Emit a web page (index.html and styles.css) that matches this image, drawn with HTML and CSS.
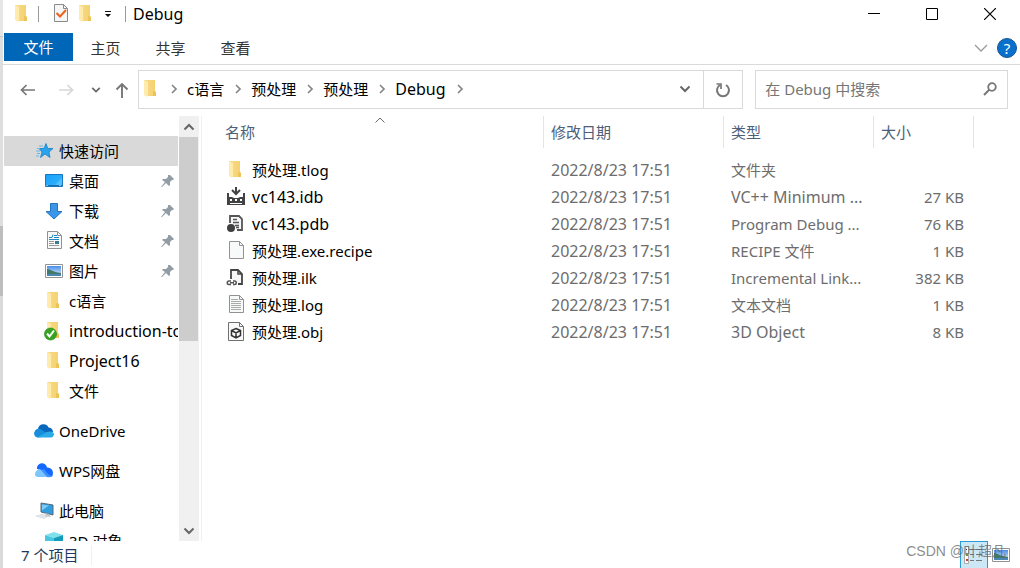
FILE: index.html
```html
<!DOCTYPE html>
<html lang="zh-CN">
<head>
<meta charset="utf-8">
<title>Debug</title>
<link rel="stylesheet" href="styles.css">
</head>
<body>
<svg class="defs" aria-hidden="true">
  <defs>
    <linearGradient id="gf" x1="0" x2="1"><stop offset="0" stop-color="#f8dc8c"/><stop offset="1" stop-color="#f5d06c"/></linearGradient>
    <linearGradient id="gb" x1="0" x2="1" y2="1"><stop offset="0" stop-color="#16a0f8"/><stop offset="1" stop-color="#36b6ff"/></linearGradient>
    <linearGradient id="gs" y2="1" x2="0"><stop offset="0" stop-color="#4b8de8"/><stop offset="1" stop-color="#e2f1fb"/></linearGradient>
  </defs>
  <symbol id="folder" viewBox="0 0 20 20"><path d="M3 1h11v11l1 1v4H5L3 15z" fill="url(#gf)"/><path d="M3 1l4 2v13l-1 2-3-2z" fill="#ffebad"/><path d="M12 12l3 1v4h-3z" fill="#edc256"/></symbol>
  <symbol id="page" viewBox="0 0 20 20"><path d="M3.500 .5h10l4 4v13h-14z" fill="#f8f9f9" stroke="#929292"/><path d="M13.500 .5v4h4" fill="none" stroke="#929292"/></symbol>
  <symbol id="pin" viewBox="0 0 14 14"><path d="M9 1l4 4-1 1-1 0-2 2 0 3-1 1-3-3-4 4-1 0 4-5-3-2 1-1 3 0 2-2 0-2z" fill="#929ca5"/></symbol>
  <symbol id="picture" viewBox="0 0 20 20"><path d="M1.500 3.500h17v13h-17z" fill="#fff" stroke="#929292"/><path d="M3 5h14v10H3z" fill="url(#gs)"/><path d="M3 8c4 0 5 3 14 4v1H3z" fill="#42796b"/><path d="M3 13h14v2H3z" fill="#4c87b4"/></symbol>
  <symbol id="right" viewBox="0 0 10 10"><path d="M3 1l4 4-4 4" fill="none" stroke="#858585" stroke-width="1.700"/></symbol>
  <symbol id="down" viewBox="0 0 12 12"><path d="M1.500 3.500L6 8l4.500-4.500" fill="none" stroke="currentColor" stroke-width="2"/></symbol>
</svg>

<div class="window">
  <header class="titlebar">
    <svg class="icon"><use href="#folder"/></svg>
    <span class="rule"></span>
    <button class="quick" aria-label="属性"><svg class="icon" viewBox="0 0 20 20"><path d="M3.500 .5h9l4 4v13h-13z" fill="#f5f6f8" stroke="#8a8a8a"/><path d="M12.500 .5v4h4" fill="none" stroke="#8a8a8a"/><path d="M5.500 9l3.500 3.500L15 6" fill="none" stroke="#ee621c" stroke-width="2"/></svg></button>
    <button class="quick second" aria-label="新建文件夹"><svg class="icon"><use href="#folder"/></svg></button>
    <button class="quick more" aria-label="自定义快速访问工具栏"><svg viewBox="0 0 8 8"><path d="M1 1h6v1H1zM1 4h6L4 7z" fill="#111"/></svg></button>
    <span class="rule"></span>
    <h1 class="title">Debug</h1>
    <div class="controls">
      <button aria-label="最小化"><svg viewBox="0 0 12 12"><path d="M0 5.500h12" stroke="#000"/></svg></button>
      <button aria-label="最大化"><svg viewBox="0 0 12 12"><path d="M.5.500h11v11H.5z" fill="none" stroke="#000"/></svg></button>
      <button aria-label="关闭"><svg viewBox="0 0 12 12"><path d="M0 0l12 12M12 0L0 12" stroke="#000" stroke-width="1.200"/></svg></button>
    </div>
  </header>

  <nav class="ribbon">
    <button class="tab file">文件</button>
    <button class="tab">主页</button>
    <button class="tab">共享</button>
    <button class="tab">查看</button>
    <button class="expand" aria-label="展开功能区"><svg viewBox="0 0 14 14"><path d="M1 4l6 6 6-6" fill="none" stroke="#9a9a9a" stroke-width="1.300"/></svg></button>
    <button class="help" aria-label="帮助">?</button>
  </nav>

  <div class="address">
    <div class="moves">
      <button aria-label="后退"><svg viewBox="0 0 16 16"><path d="M15 8H1.500M6.500 3l-5 5 5 5" fill="none" stroke="#777" stroke-width="1.700"/></svg></button>
      <button class="forward" aria-label="前进"><svg viewBox="0 0 16 16"><path d="M1 8h13.500M9.500 3l5 5-5 5" fill="none" stroke="#d7d7d7" stroke-width="1.700"/></svg></button>
      <button class="recent" aria-label="最近位置"><svg><use href="#down"/></svg></button>
      <button class="up" aria-label="上移"><svg viewBox="0 0 16 16"><path d="M8 16V2M2.500 7.500L8 2l5.500 5.500" fill="none" stroke="#777" stroke-width="1.900"/></svg></button>
    </div>
    <div class="path">
      <svg class="icon"><use href="#folder"/></svg>
      <svg class="sep"><use href="#right"/></svg><a href="#c">c语言</a>
      <svg class="sep"><use href="#right"/></svg><a href="#p1">预处理</a>
      <svg class="sep"><use href="#right"/></svg><a href="#p2">预处理</a>
      <svg class="sep"><use href="#right"/></svg><a class="latin" href="#debug">Debug</a>
      <svg class="sep"><use href="#right"/></svg>
      <button class="history" aria-label="以前的位置"><svg><use href="#down"/></svg></button>
      <button class="refresh" aria-label="刷新"><svg viewBox="0 0 16 16"><path d="M11 3a6 6 0 1 1-6 0" fill="none" stroke="#777" stroke-width="2"/><path d="M1.500 2H6v5" fill="none" stroke="#777" stroke-width="1.700"/></svg></button>
    </div>
    <div class="search">
      <input type="text" placeholder="在 Debug 中搜索" aria-label="在 Debug 中搜索">
      <svg viewBox="0 0 14 14"><circle cx="9" cy="5" r="3.800" fill="none" stroke="#777" stroke-width="1.800"/><path d="M6.500 7.500L1 13" stroke="#777" stroke-width="2"/></svg>
    </div>
  </div>

  <main class="content">
    <div class="side">
      <nav class="tree">
        <a class="root selected" href="#quick"><svg class="icon" viewBox="0 0 20 20"><path d="M12 2.500l1.800 5h5.200l-4 3.500 1 5.500-5-3.500-4.500 3.500 1.500-5.500-3-3.500h5z" fill="#2aa3ed" stroke="#1780c8" stroke-width=".8"/><path d="M5 5h4M3 7.500h3M2 10h4M3 12.500h3M2 15h3" stroke="#67b6e8"/></svg><span>快速访问</span></a>
        <a href="#desktop"><svg class="icon" viewBox="0 0 20 20"><path d="M1.500 3.500h17v12h-17z" fill="url(#gb)" stroke="#1479bf"/><path d="M10 15l8-8v8z" fill="#55c1ff"/><path d="M2 14.500h16" stroke="#166fa8"/><path d="M2.500 14.500h2m11 0h2" stroke="#fff" stroke-dasharray="1 1"/></svg><span>桌面</span><svg class="pin"><use href="#pin"/></svg></a>
        <a href="#downloads"><svg class="icon" viewBox="0 0 20 20"><path d="M6.500 2.500h7v8h4.500l-8 7.500-8-7.500h4.500z" fill="#3b96e8" stroke="#2575bf"/></svg><span>下载</span><svg class="pin"><use href="#pin"/></svg></a>
        <a href="#documents"><svg class="icon" viewBox="0 0 20 20"><use href="#page"/><path d="M5 6.500h3l1-3M10 4.500h3m-3 2h5M5 8.500h10" stroke="#2387c4" fill="none"/><path d="M5 10.500h5m-5 2h5m-5 2h10" stroke="#999"/><path d="M11 10h4v3h-4z" fill="#397a99"/></svg><span>文档</span><svg class="pin"><use href="#pin"/></svg></a>
        <a href="#pictures"><svg class="icon"><use href="#picture"/></svg><span>图片</span><svg class="pin"><use href="#pin"/></svg></a>
        <a href="#clang"><svg class="icon"><use href="#folder"/></svg><span>c语言</span></a>
        <a href="#intro"><svg class="icon" viewBox="0 0 20 20"><use href="#folder"/><circle cx="6.500" cy="13" r="6" fill="#35a521" stroke="#23851a" stroke-width=".7"/><path d="M3 12.500l2.500 3L10 9.500" fill="none" stroke="#fff" stroke-width="2"/></svg><span class="latin">introduction-to</span></a>
        <a href="#project"><svg class="icon"><use href="#folder"/></svg><span class="latin">Project16</span></a>
        <a href="#files"><svg class="icon"><use href="#folder"/></svg><span>文件</span></a>
        <a class="root group" href="#onedrive"><svg class="icon" viewBox="0 0 20 20"><path d="M4 8a5.500 5.500 0 0 1 10.500-1.500A4.500 4.500 0 0 1 19 11l-8 1-10 1A4 4 0 0 1 4 8z" fill="#0868bd"/><path d="M4 16.500a4 4 0 0 1-3-6.500c2-3 5-2.500 7-1l9 6z" fill="#188ddb"/><path d="M3 16.500L13 11c4-1.500 7 0 7 2.500a3.500 3.500 0 0 1-3 3z" fill="#2aabe8"/></svg><span>OneDrive</span></a>
        <a class="root group" href="#wps"><svg class="icon" viewBox="0 0 20 20"><path d="M3 8a5 5 0 0 1 10-1.500c5 0 7 4 5.500 8-1 2-4 2-6 0L7 9z" fill="#1468ff"/><path d="M1 14C1 10 4 7.500 7 9l6.500 7H5c-2 0-3.500-.5-4-2z" fill="#7cc5ff"/><path d="M7 9l6 7c3 .5 5 0 6-2-2 1-4 0-5-1L10 8z" fill="#3b8fff"/></svg><span>WPS网盘</span></a>
        <a class="root group" href="#pc"><svg class="icon" viewBox="0 0 20 20"><path d="M7 2l12 2v10L7 11z" fill="#2f9dde" stroke="#596977"/><path d="M8 3.500l7 1-7 5z" fill="#7ccbf5"/><path d="M11 12l4 1 2 3-5-1z" fill="#b6c1c8"/><path d="M1 15l7-2 7 2-5 3z" fill="#d0d5da"/><path d="M4 15h7m-4 2h5" stroke="#f5f5f5"/></svg><span>此电脑</span></a>
        <a href="#objects"><svg class="icon" viewBox="0 0 20 20"><path d="M1 4l9-3 9 3-9 3z" fill="#80e0ed"/><path d="M1 4l9 3v12l-9-4z" fill="#48c7df"/><path d="M10 7l9-3v11l-9 4z" fill="#149dbb"/></svg><span>3D 对象</span></a>
      </nav>
      <div class="scroll">
        <button aria-label="向上滚动"><svg class="flip"><use href="#down"/></svg></button>
        <span class="thumb"></span>
        <button aria-label="向下滚动"><svg><use href="#down"/></svg></button>
      </div>
    </div>

    <div class="files">
      <table>
        <colgroup><col class="c-name"><col class="c-date"><col class="c-type"><col class="c-size"></colgroup>
        <thead><tr>
          <th><div>名称<svg class="sort" viewBox="0 0 10 6"><path d="M.5 5.500L5 1l4.500 4.500" fill="none" stroke="#666"/></svg></div></th>
          <th><div>修改日期</div></th><th><div>类型</div></th><th><div>大小</div></th>
        </tr></thead>
        <tbody>
          <tr><td><div class="name"><svg class="icon"><use href="#folder"/></svg>预处理.tlog</div></td><td class="latin">2022/8/23 17:51</td><td>文件夹</td><td></td></tr>
          <tr><td><div class="name latin"><svg class="icon" viewBox="0 0 20 20"><path d="M10 0v7M6 3l4 4 4-4" fill="none" stroke="#424242" stroke-width="2"/><path d="M1 6h2v4h3l2 1h4l2-1h3V6h2v12H1z" fill="#424242"/><path d="M4 12h2v2H4zm5 0h2v2H9zm5 0h2v2h-2zM4 16h12v1H4z" fill="#fff"/></svg>vc143.idb</div></td><td class="latin">2022/8/23 17:51</td><td class="latin">VC++ Minimum ...</td><td>27 KB</td></tr>
          <tr><td><div class="name latin"><svg class="icon" viewBox="0 0 20 20"><path d="M4 9V2h9l3 3v11h-5" fill="#f6f6f6" stroke="#555" stroke-width="1.800"/><path d="M7 5.500h4M7 8.500h6m-4 3h4m-3 2h3" stroke="#555" stroke-width="1.500"/><circle cx="5" cy="14" r="4" fill="#404040"/></svg>vc143.pdb</div></td><td class="latin">2022/8/23 17:51</td><td>Program Debug ...</td><td>76 KB</td></tr>
          <tr><td><div class="name"><svg class="icon"><use href="#page"/></svg>预处理.exe.recipe</div></td><td class="latin">2022/8/23 17:51</td><td>RECIPE 文件</td><td>1 KB</td></tr>
          <tr><td><div class="name"><svg class="icon" viewBox="0 0 20 20"><path d="M5 11V2h7l4 4v10h-4" fill="#f6f6f6" stroke="#444" stroke-width="1.800"/><path d="M12 2v4h4" fill="none" stroke="#444" stroke-width="1.500"/><path d="M5 13H3a1.500 1.500 0 0 0 0 3.500h2M7 13h1.500a1.500 1.500 0 0 1 0 3.500H7M4 14.700h4" fill="none" stroke="#555" stroke-width="1.500"/></svg>预处理.ilk</div></td><td class="latin">2022/8/23 17:51</td><td>Incremental Link...</td><td>382 KB</td></tr>
          <tr><td><div class="name"><svg class="icon" viewBox="0 0 20 20"><use href="#page"/><path d="M5 4.500h7m-7 2h10m-10 2h10m-10 2h10m-10 2h10m-10 2h10" stroke="#aaa"/></svg>预处理.log</div></td><td class="latin">2022/8/23 17:51</td><td>文本文档</td><td>1 KB</td></tr>
          <tr><td><div class="name"><svg class="icon" viewBox="0 0 20 20"><path d="M2.500.5h11l4 4v14h-15z" fill="#f9f9f9" stroke="#707070"/><path d="M13.500.5v4h4" fill="none" stroke="#707070"/><path d="M10 6.500l4.500 2v5L10 16l-4.500-2.500v-5zM5.500 8.500L10 11l4.500-2.500M10 11v5" fill="none" stroke="#333" stroke-width="1.500"/></svg>预处理.obj</div></td><td class="latin">2022/8/23 17:51</td><td class="latin">3D Object</td><td>8 KB</td></tr>
        </tbody>
      </table>
    </div>
  </main>

  <footer class="status">
    <span class="count">7 个项目</span>
    <div class="views">
      <button class="view active" aria-label="详细信息"><svg viewBox="0 0 20 20"><path d="M.5 1.500h4v17h-4z" fill="#fff" stroke="#aaa"/><path d="M2 4h1v1H2z" fill="#333"/><path d="M2 9h2v2H2z" fill="#7b8d42"/><path d="M2 14h2v2H2z" fill="#c34322"/><path d="M6 4.500h4m2 0h6M6 9.500h4m2 0h6M6 15.500h4m2 0h6" stroke="#777"/></svg></button>
      <button class="view" aria-label="大缩略图"><svg><use href="#picture"/></svg></button>
    </div>
  </footer>
  <span class="watermark">CSDN @叶超凡</span>
</div>
</body>
</html>
```
FILE: styles.css
```css
* { box-sizing: border-box; }

body {
  margin: 0;
  background: linear-gradient(#e6e6e6 36px, #c8c8c8 36px 37px, #dedede 37px 226px, #bdbdbd 226px 296px, #dadada 296px);
  color: #000;
  font: 15px/20px "Noto Sans", "Noto Sans CJK SC", sans-serif;
}

button {
  display: flex;
  align-items: center;
  justify-content: center;
  padding: 0;
  border: 0;
  background: none;
  color: #666;
  font: inherit;
}

a { color: inherit; text-decoration: none; }
svg { flex: none; }

.defs { position: absolute; width: 0; height: 0; }
.icon { width: 20px; height: 20px; }
.latin { font-size: 16px; }

.window {
  position: relative;
  display: flex;
  flex-direction: column;
  height: 100vh;
  margin-left: 3px;
  background: #fff;
  overflow: hidden;
}

.titlebar { display: flex; align-items: center; height: 33px; padding: 0 1px 5px 9px; }
.rule { width: 1px; height: 16px; margin: 0 12px 0 6px; background: #999; }
.quick.second { margin-left: 5px; }
.quick.more { width: 24px; }
.more svg { width: 8px; height: 8px; }
.more + .rule { margin: 0 7px 0 5px; }
.title { flex: 1; margin: 0; font-size: 16px; font-weight: 400; }
.controls { display: flex; }
.controls button { width: 58px; height: 28px; }
.controls svg { width: 12px; height: 12px; }

.ribbon { display: flex; height: 32px; padding-left: 1px; border-bottom: 1px solid #dadada; }
.tab { width: 65px; height: 29px; color: #333; }
.tab.file { width: 69px; height: 28px; background: #0067b8; color: #fff; }
.expand { width: 20px; height: 29px; margin-left: auto; }
.expand svg { width: 14px; height: 14px; }
.help {
  width: 20px;
  height: 20px;
  margin: 5px 3px 0 6px;
  border: 1px solid #1b548c;
  border-radius: 50%;
  background: #0870cc;
  color: #fff;
}

.address { display: flex; padding: 5px 12px 7px 14px; }
.moves { display: flex; align-items: center; width: 121px; }
.moves svg { width: 16px; height: 16px; }
.moves button { width: 22px; }
.moves .forward { margin-left: 16px; }
.moves .recent { margin-left: 8px; }
.moves .up { margin-left: 4px; }
.moves .recent svg { width: 10px; height: 10px; }

.path, .search { display: flex; align-items: center; height: 39px; padding-bottom: 2px; border: 1px solid #d9d9d9; }
.path { flex: 1; min-width: 0; }
.path a { margin: 0 5px 0 4px; white-space: nowrap; }
.path .icon { margin: 0 4px 0 2px; }
.sep { width: 10px; height: 10px; margin: 0 4px; }
.history { width: 36px; margin-left: auto; }
.history svg { width: 12px; height: 12px; }
.refresh { align-self: flex-start; width: 39px; height: 37px; border-left: 1px solid #d9d9d9; }
.refresh svg { width: 16px; height: 16px; }

.search { width: 25.5%; margin-left: 12px; padding: 0 10px 2px 9px; }
.search input { flex: 1; min-width: 0; padding: 0; border: 0; outline: 0; background: none; font: inherit; }
.search input::placeholder { color: #767676; opacity: 1; }
.search svg { width: 14px; height: 14px; }

.content { display: flex; flex: 1; min-height: 0; }
.side { display: flex; width: 199px; padding-left: 1px; border-right: 1px solid #f0f0f0; }
.tree { width: 174px; padding-top: 20px; overflow: hidden; }
.tree a { display: flex; align-items: center; height: 30px; padding: 0 2px 0 40px; white-space: nowrap; }
.tree a span { margin-left: 5px; }
.tree .root { padding-left: 30px; }
.tree .selected { background: #d9d9d9; }
.tree .group { margin-top: 10px; }
.pin { width: 14px; height: 14px; margin-left: auto; margin-right: 1px; }
.scroll { display: flex; flex-direction: column; width: 20px; margin-left: 1px; background: #f0f0f0; }
.scroll button { height: 21px; }
.scroll svg { width: 12px; height: 12px; }
.scroll .flip { transform: rotate(180deg); }
.scroll .thumb { height: 48%; margin: 0 1px 0 0; background: #cdcdcd; }
.scroll button:last-child { margin-top: auto; }

.files { flex: 1; min-width: 0; overflow: hidden; }
table { width: 772px; table-layout: fixed; border-collapse: collapse; }
.c-name { width: 342px; }
.c-date { width: 180px; }
.c-type { width: 150px; }
.c-size { width: 100px; }
th { padding: 0 0 8px; color: #4c607a; font-weight: 400; text-align: left; }
th div { position: relative; height: 32px; padding: 6px 0 0 7px; border-right: 1px solid #e4e4e4; }
th:first-child div { padding-left: 23px; }
.sort { position: absolute; top: 1px; left: 173px; width: 10px; height: 6px; }
td { height: 27px; padding: 0 0 0 7px; color: #6d6d6d; white-space: nowrap; }
td:first-child { padding-left: 24px; color: #000; }
td:last-child { padding-right: 10px; text-align: right; }
.name { display: flex; align-items: center; gap: 6px; }

.status { display: flex; align-items: flex-start; height: 27px; padding: 0 9px 0 18px; color: #1e395b; }
.count { margin-top: 4px; padding-right: 13px; border-right: 1px solid #f0f0f0; }
.views { display: flex; gap: 3px; margin-left: auto; }
.view { width: 20px; height: 27px; }
.view svg { width: 20px; height: 20px; }
.view.active { width: 28px; border: 1px solid #2c9bd6; border-bottom: 0; background: #cce8f6; }
.watermark {
  position: absolute;
  right: 14px;
  bottom: 7px;
  color: rgba(100, 100, 100, 0.75);
  font: 14px/20px "Liberation Sans", "Noto Sans CJK SC", sans-serif;
}
```
